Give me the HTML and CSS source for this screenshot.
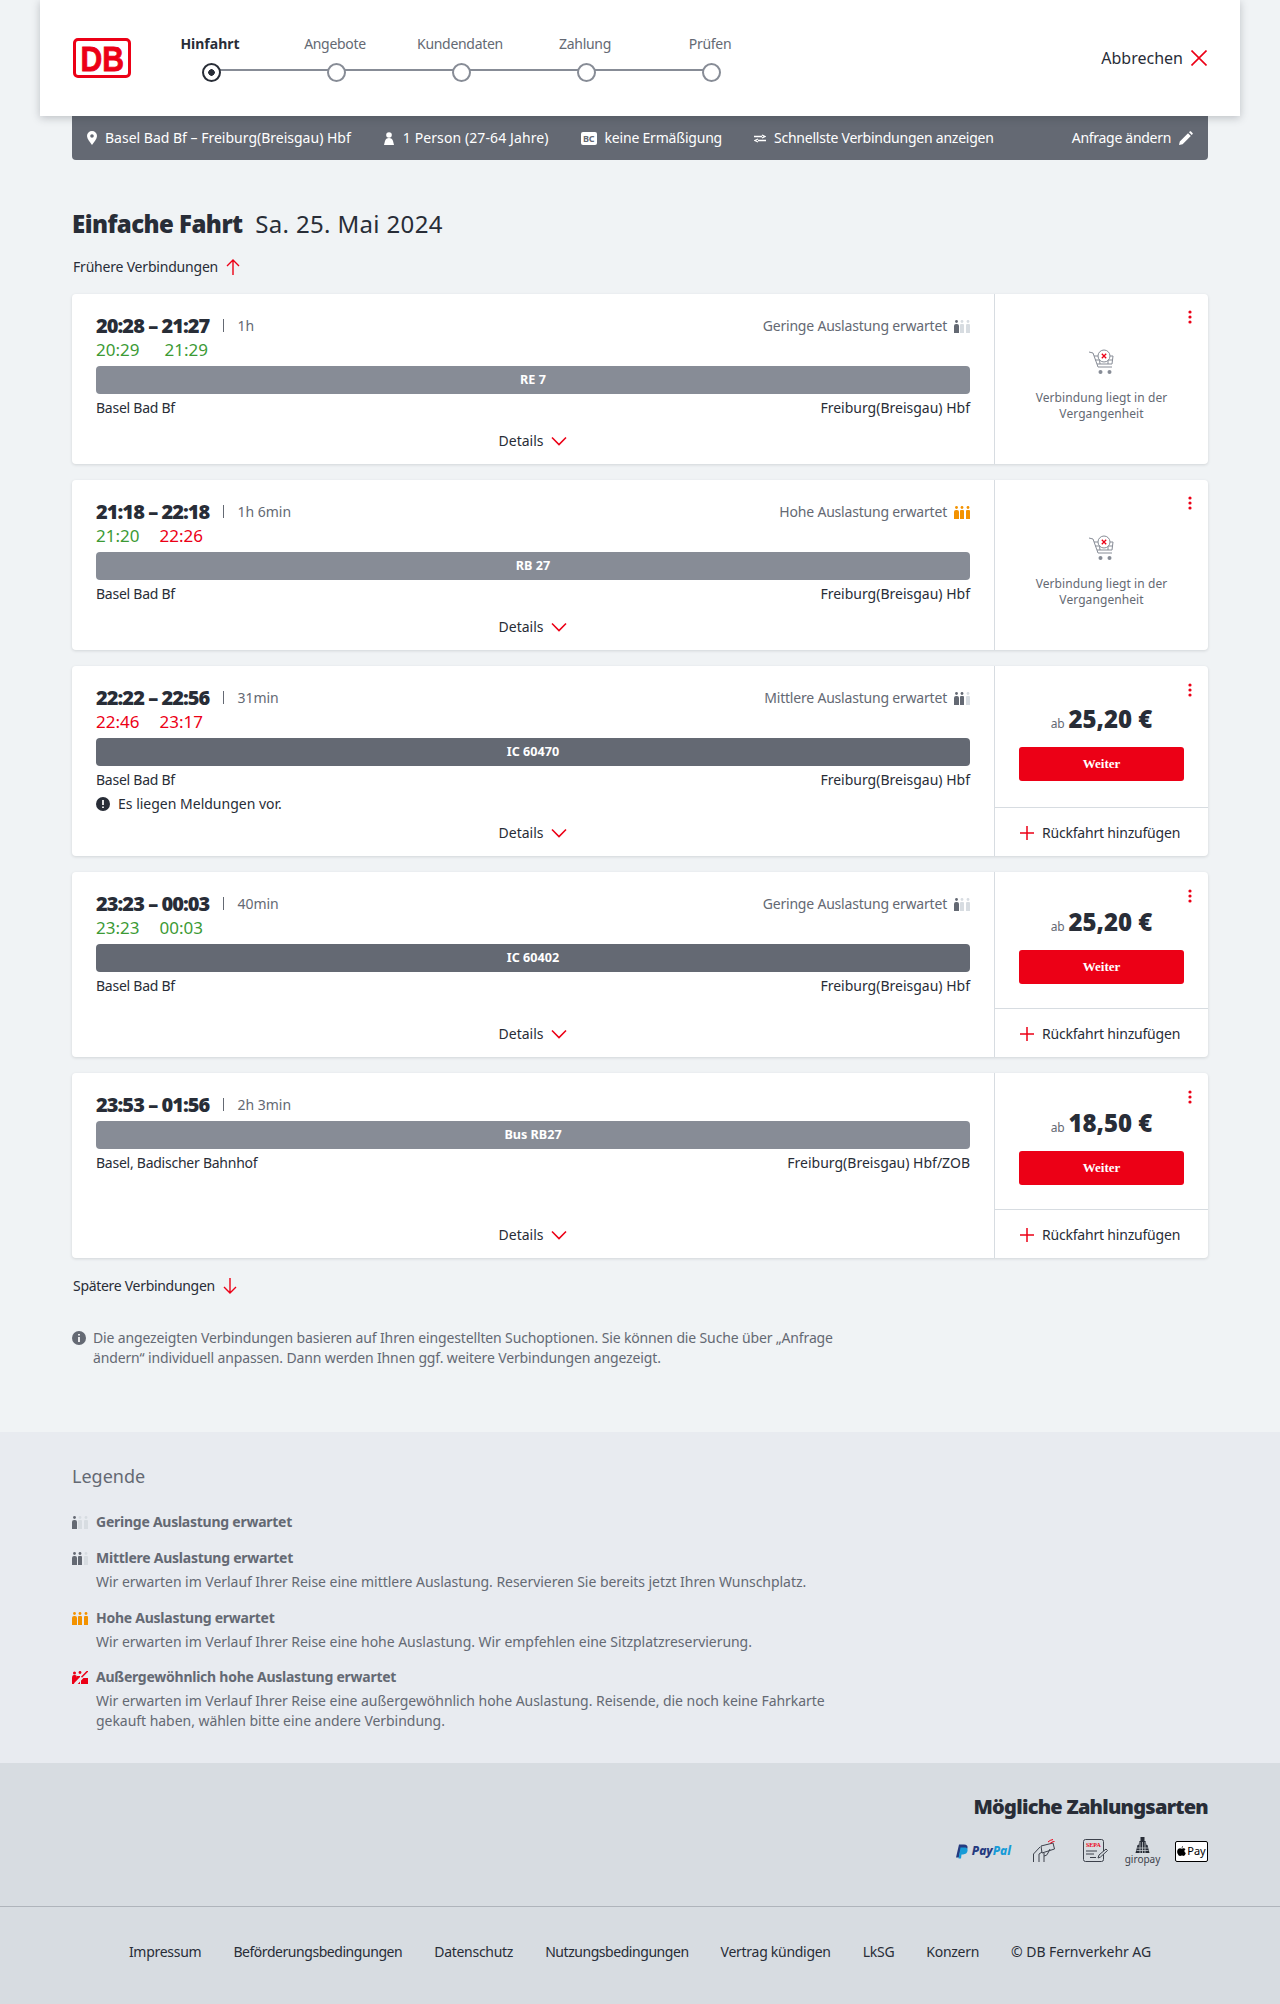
FILE: index.html
```html
<!DOCTYPE html>
<html lang="de">
<head>
    <meta charset="UTF-8">
    <meta name="viewport" content="width=device-width, initial-scale=1.0">
    <title>Verbindungen</title>
    <link rel="stylesheet" href="styles.css">
</head>
<body>
    <!-- shared icons -->
    <svg class="defs" width="0" height="0">
        <symbol id="occ-1" viewBox="0 0 16 13">
            <g fill="#d7dce1"><circle cx="8" cy="1.500" r="1.400"/><path d="M6 5q0-1 1-1h2q1 0 1 1v8H6z"/><circle cx="14" cy="1.500" r="1.400"/><path d="M12 5q0-1 1-1h2q1 0 1 1v8h-4z"/></g>
            <g fill="#646973"><circle cx="2.500" cy="1.500" r="1.400"/><path d="M0 6q0-2 2-2h1q2 0 2 2v7H0z"/></g>
        </symbol>
        <symbol id="occ-2" viewBox="0 0 16 13">
            <g fill="#d7dce1"><circle cx="14" cy="1.500" r="1.400"/><path d="M12 5q0-1 1-1h2q1 0 1 1v8h-4z"/></g>
            <g fill="#646973"><circle cx="2.500" cy="1.500" r="1.400"/><path d="M0 6q0-2 2-2h1q2 0 2 2v7H0z"/><circle cx="8" cy="1.500" r="1.400"/><path d="M6 5q0-1 1-1h2q1 0 1 1v8H6z"/></g>
        </symbol>
        <symbol id="occ-3" viewBox="0 0 16 13">
            <g fill="#f39200"><circle cx="2.500" cy="1.500" r="1.400"/><path d="M0 6q0-2 2-2h1q2 0 2 2v7H0z"/><circle cx="8" cy="1.500" r="1.400"/><path d="M6 5q0-1 1-1h2q1 0 1 1v8H6z"/><circle cx="14" cy="1.500" r="1.400"/><path d="M12 5q0-1 1-1h2q1 0 1 1v8h-4z"/></g>
        </symbol>
        <symbol id="occ-4" viewBox="0 0 16 13">
            <g fill="#ec0016"><circle cx="2.500" cy="2" r="1.500"/><path d="M0 7q0-3 2-3h1q2 0 2 3v6H0z"/><path d="M5 5h3v8H5z"/><circle cx="8" cy="1.500" r="1.400"/><path d="M9 7h7v6H9z"/></g>
            <path d="M16.500-.5L3 13.500" stroke="#e8ebf0" stroke-width="3.200"/>
            <path d="M15.800-.2L9.500 6.300" stroke="#ec0016" stroke-width="1.500"/>
        </symbol>
        <symbol id="chev" viewBox="0 0 16 10">
            <path d="M1 1.500l7 7 7-7" fill="none" stroke="#ec0016" stroke-width="1.600"/>
        </symbol>
        <symbol id="dots" viewBox="0 0 4 14">
            <circle cx="2" cy="2" r="1.600"/><circle cx="2" cy="7" r="1.600"/><circle cx="2" cy="12" r="1.600"/>
        </symbol>
        <symbol id="plus" viewBox="0 0 14 14">
            <path d="M7 0v14M0 7h14" fill="none" stroke="#ec0016" stroke-width="1.500"/>
        </symbol>
        <symbol id="cart" viewBox="0 0 26 26">
            <g fill="none" stroke="#878c96" stroke-width="1">
                <path d="M0 3l4 1 5 14h14"/><path d="M5 7h19l-1 8H8"/><path d="M6 11h17"/><path d="M10 7l1 8M19 7v8"/><circle cx="15" cy="7" r="6" fill="#fff"/>
            </g>
            <path d="M12.800 4.800l4.400 4.400M17.200 4.800l-4.400 4.400" stroke="#ec0016" stroke-width="1.300"/>
            <circle cx="11.500" cy="23" r="2" fill="#878c96"/><circle cx="20.500" cy="23" r="2" fill="#878c96"/>
        </symbol>
    </svg>

    <header class="top">
        <div class="logo"><span>DB</span></div>
        <ol class="steps">
            <li class="step step-on">Hinfahrt</li>
            <li class="step">Angebote</li>
            <li class="step">Kundendaten</li>
            <li class="step">Zahlung</li>
            <li class="step">Prüfen</li>
        </ol>
        <a class="cancel">Abbrechen
            <svg width="16" height="16" viewBox="0 0 16 16"><path d="M.5.500l15 15M15.500.500l-15 15" fill="none" stroke="#ec0016" stroke-width="1.600"/></svg>
        </a>
    </header>

    <div class="wrap">
        <div class="infobar">
            <span class="info info-route">
                <svg width="10" height="14" viewBox="0 0 10 14"><path fill-rule="evenodd" d="M5 0a5 5 0 0 1 5 5c0 3-3 6-5 9-2-3-5-6-5-9a5 5 0 0 1 5-5zm0 3.200a1.800 1.800 0 1 0 0 3.600 1.800 1.800 0 0 0 0-3.600z" fill="#fff"/></svg>
                Basel Bad Bf – Freiburg(Breisgau) Hbf</span>
            <span class="info info-person">
                <svg width="12" height="13" viewBox="0 0 12 13"><circle cx="6" cy="3" r="2.800" fill="#fff"/><path d="M1 13l1-4q.8-3 4-3t4 3l1 4z" fill="#fff"/></svg>
                1 Person (27-64 Jahre)</span>
            <span class="info info-card"><b class="bc">BC</b>keine Ermäßigung</span>
            <span class="info info-fast">
                <svg width="12" height="9" viewBox="0 0 12 9"><path d="M0 2.500h8M8 1l3 1.500L8 4M12 6.500H4M4 5L1 6.500 4 8" fill="none" stroke="#fff" stroke-width="1.300"/></svg>
                Schnellste Verbindungen anzeigen</span>
            <a class="change">Anfrage ändern
                <svg width="14" height="14" viewBox="0 0 14 14"><path d="M0 14l.8-3.600L9 2.200 11.800 5 3.600 13.200zM10 1.200L11 .3q.4-.3.8 0l1.900 1.900q.3.4 0 .8l-1 1z" fill="#fff"/></svg>
            </a>
        </div>

        <h1 class="title"><strong>Einfache Fahrt</strong> Sa. 25. Mai 2024</h1>

        <a class="more more-top">Frühere Verbindungen
            <svg width="14" height="16" viewBox="0 0 14 16"><path d="M7 16V1M1 7l6-6 6 6" fill="none" stroke="#ec0016" stroke-width="1.400"/></svg>
        </a>

        <!-- card 1 -->
        <article class="card card-short">
            <div class="conn">
                <div class="row">
                    <div class="times"><b class="plan">20:28 – 21:27</b><span class="dur">1h</span></div>
                    <div class="load">Geringe Auslastung erwartet <svg class="occ"><use href="#occ-1"/></svg></div>
                </div>
                <div class="real real-wide"><span class="ok">20:29</span><span class="ok">21:29</span></div>
                <div class="train train-light">RE 7</div>
                <div class="row stations"><span>Basel Bad Bf</span><span>Freiburg(Breisgau) Hbf</span></div>
                <a class="details">Details <svg class="chev"><use href="#chev"/></svg></a>
            </div>
            <aside class="side side-past">
                <svg class="dots"><use href="#dots"/></svg>
                <svg class="cart"><use href="#cart"/></svg>
                <p>Verbindung liegt in der Vergangenheit</p>
            </aside>
        </article>

        <!-- card 2 -->
        <article class="card card-short">
            <div class="conn">
                <div class="row">
                    <div class="times"><b class="plan">21:18 – 22:18</b><span class="dur">1h 6min</span></div>
                    <div class="load">Hohe Auslastung erwartet <svg class="occ"><use href="#occ-3"/></svg></div>
                </div>
                <div class="real"><span class="ok">21:20</span><span class="late">22:26</span></div>
                <div class="train train-light">RB 27</div>
                <div class="row stations"><span>Basel Bad Bf</span><span>Freiburg(Breisgau) Hbf</span></div>
                <a class="details">Details <svg class="chev"><use href="#chev"/></svg></a>
            </div>
            <aside class="side side-past">
                <svg class="dots"><use href="#dots"/></svg>
                <svg class="cart"><use href="#cart"/></svg>
                <p>Verbindung liegt in der Vergangenheit</p>
            </aside>
        </article>

        <!-- card 3 -->
        <article class="card card-notice">
            <div class="conn">
                <div class="row">
                    <div class="times"><b class="plan">22:22 – 22:56</b><span class="dur">31min</span></div>
                    <div class="load">Mittlere Auslastung erwartet <svg class="occ"><use href="#occ-2"/></svg></div>
                </div>
                <div class="real"><span class="late">22:46</span><span class="late">23:17</span></div>
                <div class="train train-dark">IC 60470</div>
                <div class="row stations"><span>Basel Bad Bf</span><span>Freiburg(Breisgau) Hbf</span></div>
                <div class="notice">
                    <svg width="14" height="14" viewBox="0 0 14 14"><circle cx="7" cy="7" r="7" fill="#282d37"/><path d="M7 3v5M7 9.500v1.600" stroke="#fff" stroke-width="1.700"/></svg>
                    Es liegen Meldungen vor.
                </div>
                <a class="details">Details <svg class="chev"><use href="#chev"/></svg></a>
            </div>
            <aside class="side">
                <div class="offer">
                    <svg class="dots"><use href="#dots"/></svg>
                    <div class="price"><small>ab</small> <b>25,20 €</b></div>
                    <button class="next">Weiter</button>
                </div>
                <a class="back"><svg class="plus"><use href="#plus"/></svg>Rückfahrt hinzufügen</a>
            </aside>
        </article>

        <!-- card 4 -->
        <article class="card card-tall">
            <div class="conn">
                <div class="row">
                    <div class="times"><b class="plan">23:23 – 00:03</b><span class="dur">40min</span></div>
                    <div class="load">Geringe Auslastung erwartet <svg class="occ"><use href="#occ-1"/></svg></div>
                </div>
                <div class="real"><span class="ok">23:23</span><span class="ok">00:03</span></div>
                <div class="train train-dark">IC 60402</div>
                <div class="row stations"><span>Basel Bad Bf</span><span>Freiburg(Breisgau) Hbf</span></div>
                <a class="details">Details <svg class="chev"><use href="#chev"/></svg></a>
            </div>
            <aside class="side">
                <div class="offer">
                    <svg class="dots"><use href="#dots"/></svg>
                    <div class="price"><small>ab</small> <b>25,20 €</b></div>
                    <button class="next">Weiter</button>
                </div>
                <a class="back"><svg class="plus"><use href="#plus"/></svg>Rückfahrt hinzufügen</a>
            </aside>
        </article>

        <!-- card 5 -->
        <article class="card card-tall">
            <div class="conn">
                <div class="row">
                    <div class="times"><b class="plan">23:53 – 01:56</b><span class="dur">2h 3min</span></div>
                </div>
                <div class="train train-light">Bus RB27</div>
                <div class="row stations"><span>Basel, Badischer Bahnhof</span><span>Freiburg(Breisgau) Hbf/ZOB</span></div>
                <a class="details">Details <svg class="chev"><use href="#chev"/></svg></a>
            </div>
            <aside class="side">
                <div class="offer">
                    <svg class="dots"><use href="#dots"/></svg>
                    <div class="price"><small>ab</small> <b>18,50 €</b></div>
                    <button class="next">Weiter</button>
                </div>
                <a class="back"><svg class="plus"><use href="#plus"/></svg>Rückfahrt hinzufügen</a>
            </aside>
        </article>

        <a class="more more-bottom">Spätere Verbindungen
            <svg width="14" height="16" viewBox="0 0 14 16"><path d="M7 0v15M1 9l6 6 6-6" fill="none" stroke="#ec0016" stroke-width="1.400"/></svg>
        </a>

        <div class="hint">
            <svg width="14" height="14" viewBox="0 0 14 14"><circle cx="7" cy="7" r="7" fill="#646973"/><path d="M7 6v5M7 3v1.600" stroke="#fff" stroke-width="1.700"/></svg>
            <p>Die angezeigten Verbindungen basieren auf Ihren eingestellten Suchoptionen. Sie können die Suche über „Anfrage ändern“ individuell anpassen. Dann werden Ihnen ggf. weitere Verbindungen angezeigt.</p>
        </div>
    </div>

    <section class="legend">
        <h2>Legende</h2>
        <div class="legend-item legend-first">
            <svg class="occ"><use href="#occ-1"/></svg>
            <div><h3>Geringe Auslastung erwartet</h3></div>
        </div>
        <div class="legend-item legend-second">
            <svg class="occ"><use href="#occ-2"/></svg>
            <div><h3>Mittlere Auslastung erwartet</h3>
            <p>Wir erwarten im Verlauf Ihrer Reise eine mittlere Auslastung. Reservieren Sie bereits jetzt Ihren Wunschplatz.</p></div>
        </div>
        <div class="legend-item">
            <svg class="occ"><use href="#occ-3"/></svg>
            <div><h3>Hohe Auslastung erwartet</h3>
            <p>Wir erwarten im Verlauf Ihrer Reise eine hohe Auslastung. Wir empfehlen eine Sitzplatzreservierung.</p></div>
        </div>
        <div class="legend-item">
            <svg class="occ"><use href="#occ-4"/></svg>
            <div><h3>Außergewöhnlich hohe Auslastung erwartet</h3>
            <p>Wir erwarten im Verlauf Ihrer Reise eine außergewöhnlich hohe Auslastung. Reisende, die noch keine Fahrkarte gekauft haben, wählen bitte eine andere Verbindung.</p></div>
        </div>
    </section>

    <footer class="foot">
        <div class="pay">
            <h2>Mögliche Zahlungsarten</h2>
            <div class="pay-icons">
                <span class="paypal">
                    <svg width="12" height="15" viewBox="0 0 12 14"><path d="M3 0h5q4 0 3.500 3.500T6 7.500H4L3 13H0z" fill="#253b80"/><path d="M4.500 3h5q2.500.5 2 3.500T7 10H5.500L5 14H2.500z" fill="#179bd7"/></svg>
                    <i>Pay<em>Pal</em></i>
                </span>
                <svg class="pay-hand" width="23" height="24" viewBox="0 0 23 24"><g fill="none" stroke="#3c414b"><path d="M.5 23v-8L7 8"/><path d="M8 7l12-3 1.500 6L9 14z" fill="#d7dce1"/><path d="M6 23v-8l3-2M11 23v-9"/><path d="M11 17q3 0 4-3l2-4"/></g><path d="M15 3q2-2 5-2.500M17 4.500q2-2 4.500-2" fill="none" stroke="#ec0016"/></svg>
                <span class="sepa">
                    <b>SEPA</b>
                    <svg width="25" height="24" viewBox="0 0 25 24"><rect x=".5" y=".5" width="20" height="22" rx="2" fill="none" stroke="#3c414b"/><path d="M3 12h11M3 15h8M7 18.500h6" stroke="#3c414b"/><path d="M15 19l1-3 7-6 1.500 1.500-7 6.500z" fill="#d7dce1" stroke="#3c414b"/></svg>
                </span>
                <span class="giropay">
                    <svg width="15" height="16" viewBox="0 0 14 16"><path d="M5 0h4v4h1l1 4h1l2 8H0l2-8h1l1-4h1z" fill="#282d37"/><path d="M1 11h12M1 13.500h12M4.500 5v11M7 5v11M9.500 5v11" stroke="#d7dce1" stroke-width=".7"/></svg>
                    giropay
                </span>
                <span class="applepay">
                    <svg width="9" height="10" viewBox="0 0 9 10"><path d="M6 0q.2 1.400-1.300 2.200Q4.500.8 6 0zM4.600 2.700c.7 0 1.200-.5 2-.5q1.200 0 1.900 1-1.400 1-1 2.400.3 1 1.300 1.500-.7 2.900-2.100 2.900c-.7 0-1-.4-1.800-.4s-1.200.4-1.800.4Q1.500 10 .5 7.500-.5 4.500 1.400 2.800q1.500-1.200 3.200-.1z" fill="#000"/></svg>
                    Pay
                </span>
            </div>
        </div>
        <nav class="foot-links">
            <a>Impressum</a>
            <a class="link-long">Beförderungsbedingungen</a>
            <a>Datenschutz</a>
            <a class="link-long">Nutzungsbedingungen</a>
            <a>Vertrag kündigen</a>
            <a>LkSG</a>
            <a>Konzern</a>
            <a class="link-copy">© DB Fernverkehr AG</a>
        </nav>
    </footer>
</body>
</html>
```

FILE: styles.css
```css
*{
    margin: 0;
    padding: 0;
    box-sizing: border-box;
}
body {
    width: 1280px;
    background: #f0f3f5;
    color: #282d37;
    font-family: "Noto Sans", sans-serif;
    font-size: 14px;
    line-height: 20px;
}
.defs{
    position: absolute;
}
ol{
    list-style: none;
}

/* top bar */
.top {
    position: relative;
    z-index: 2;
    display: flex;
    align-items: center;
    width: 1200px;
    height: 116px;
    margin: 0 40px;
    padding: 0 33px;
    background: #fff;
    box-shadow: 0 2px 8px rgba(40, 45, 55, 0.25);
}
.logo {
    display: flex;
    align-items: center;
    justify-content: center;
    width: 58px;
    height: 40px;
    border: 3.500px solid #ec0016;
    border-radius: 5px;
    background: #fff;
}
.logo span {
    display: block;
    color: #ec0016;
    font-family: "Liberation Sans", sans-serif;
    font-size: 35px;
    font-weight: 700;
    line-height: 33px;
    -webkit-text-stroke: 0.8px #ec0016;
    transform: scaleX(0.86);
}
.steps {
    display: flex;
    margin: 0 0 0 15.500px;
}
.step {
    position: relative;
    width: 125px;
    height: 50px;
    padding: 1px 0 0 2px;
    color: #646973;
    font-size: 14px;
    letter-spacing: -0.3px;
    text-align: center;
}
.step::before {
    content: "";
    position: absolute;
    z-index: 1;
    left: 55px;
    top: 30px;
    width: 15px;
    height: 15px;
    border: 2px solid #878c96;
    border-radius: 50%;
    background: #fff;
}
.step::after {
    content: "";
    position: absolute;
    left: 62px;
    top: 36px;
    width: 125px;
    height: 2px;
    background: #878c96;
}
.step:last-child::after {
    display: none;
}
.step-on {
    color: #282d37;
    font-weight: 700;
    letter-spacing: 0;
}
.step-on::before {
    border-color: #282d37;
    background: radial-gradient(circle, #282d37 0 3px, #fff 3.5px);
}
.cancel {
    display: flex;
    align-items: center;
    gap: 8px;
    margin-left: auto;
    font-size: 16px;
}

/* content */
.wrap {
    padding: 0 72px;
}
.infobar {
    display: flex;
    align-items: center;
    height: 44px;
    padding: 0 15px;
    border-radius: 0 0 4px 4px;
    background: #646973;
    color: #fff;
}
.info {
    display: flex;
    align-items: center;
    gap: 8px;
    margin-right: 32px;
}
.info-person {
    letter-spacing: 0.1px;
}
.info-card {
    letter-spacing: -0.2px;
}
.info-fast {
    letter-spacing: -0.24px;
}
.bc {
    width: 16px;
    height: 13px;
    border-radius: 2px;
    background: #fff;
    color: #646973;
    font-size: 9px;
    line-height: 13px;
    text-align: center;
}
.change {
    display: flex;
    align-items: center;
    gap: 8px;
    margin-left: auto;
    letter-spacing: -0.3px;
}
.title {
    margin-top: 48px;
    font-size: 24px;
    font-weight: 400;
    line-height: 32px;
    letter-spacing: 0.35px;
}
.title strong {
    margin-right: 6px;
    font-weight: 900;
    letter-spacing: -0.55px;
}
.more {
    display: flex;
    align-items: center;
    gap: 8px;
    padding-left: 1px;
}
.more-top {
    margin: 17px 0 17px;
    letter-spacing: -0.2px;
}
.more-bottom {
    margin-top: 18px;
    letter-spacing: -0.3px;
}
.card {
    display: flex;
    margin-bottom: 16px;
    border-radius: 4px;
    background: #fff;
    box-shadow: 0 1px 3px rgba(40, 45, 55, 0.15);
}
.card-short { height: 170px; }
.card-notice { height: 190px; }
.card-tall { height: 185px; }
.conn {
    display: flex;
    flex-direction: column;
    flex: 1;
    padding: 20px 24px 0;
    border-right: 1px solid #d7dce1;
}
.row {
    display: flex;
    justify-content: space-between;
    align-items: center;
}
.times {
    display: flex;
    align-items: center;
    height: 24px;
}
.plan {
    font-size: 20px;
    font-weight: 900;
    letter-spacing: -0.95px;
}
.dur {
    position: relative;
    margin-left: 14px;
    padding-left: 14px;
    color: #646973;
}
.dur::before {
    content: "";
    position: absolute;
    left: 0;
    top: 3px;
    width: 1px;
    height: 13px;
    background: #646973;
}
.load {
    display: flex;
    align-items: center;
    gap: 7px;
    color: #646973;
    letter-spacing: -0.2px;
}
.occ {
    flex: none;
    width: 16px;
    height: 13px;
}
.real {
    display: flex;
    gap: 20px;
    height: 24px;
    font-size: 17px;
    line-height: 24px;
}
.real-wide {
    gap: 25px;
}
.ok { color: #3c9a35; }
.late { color: #ec0016; }
.train {
    height: 28px;
    margin-top: 4px;
    border-radius: 4px;
    color: #fff;
    font-size: 12.600px;
    font-weight: 700;
    line-height: 28px;
    text-align: center;
}
.train-light { background: #878c96; }
.train-dark { background: #646973; }
.stations {
    margin-top: 4px;
}
.stations span:first-child {
    letter-spacing: -0.25px;
}
.notice {
    display: flex;
    align-items: center;
    gap: 8px;
    margin-top: 4px;
}
.details {
    display: flex;
    align-items: center;
    justify-content: center;
    gap: 8px;
    margin-top: auto;
    margin-bottom: 13px;
}
.chev {
    width: 16px;
    height: 10px;
}
.dots {
    position: absolute;
    right: 16px;
    top: 16px;
    width: 4px;
    height: 14px;
    fill: #ec0016;
}
.offer .dots {
    top: 17px;
}
.side {
    position: relative;
    display: flex;
    flex-direction: column;
    width: 213px;
}
.side-past {
    align-items: center;
    padding-top: 55px;
    color: #646973;
    font-size: 12px;
    line-height: 16px;
    text-align: center;
}
.cart {
    width: 26px;
    height: 26px;
}
.side-past p {
    width: 150px;
    margin-top: 15px;
    letter-spacing: 0.08px;
}
.offer {
    position: relative;
    flex: 1;
    padding-top: 35px;
    text-align: center;
}
.card-tall .offer {
    padding-top: 32px;
}
.price {
    height: 36px;
    line-height: 36px;
}
.price small {
    color: #646973;
    font-size: 12px;
}
.price b {
    font-size: 24px;
    font-weight: 900;
}
.next {
    display: block;
    width: 165px;
    height: 34px;
    margin: 10px 0 0 24px;
    border: 0;
    border-radius: 3px;
    background: #ec0016;
    color: #fff;
    font-family: "Liberation Serif", serif;
    font-size: 13px;
    font-weight: 700;
}
.back {
    display: flex;
    align-items: center;
    gap: 8px;
    height: 49px;
    padding: 2px 0 0 25px;
    border-top: 1px solid #d7dce1;
    letter-spacing: -0.2px;
}
.plus {
    width: 14px;
    height: 14px;
}
.hint {
    display: flex;
    gap: 7px;
    margin-top: 32px;
    margin-bottom: 64px;
    color: #646973;
    letter-spacing: -0.14px;
}
.hint svg {
    flex: none;
    margin-top: 3px;
}
.hint p {
    width: 765px;
}

/* legend */
.legend {
    height: 331px;
    padding: 32px 72px 0;
    background: #e8ebf0;
    color: #646973;
}
.legend h2 {
    margin-bottom: 24px;
    font-size: 18px;
    font-weight: 400;
    line-height: 24px;
}
.legend-item {
    display: flex;
    gap: 8px;
    margin-bottom: 15px;
}
.legend-first {
    margin-bottom: 12px;
}
.legend-second {
    margin-bottom: 16px;
}
.legend-item .occ {
    margin-top: 4px;
}
.legend-item h3 {
    margin-bottom: 4px;
    font-size: 14px;
    font-weight: 700;
    letter-spacing: -0.25px;
}
.legend-item p {
    width: 760px;
    letter-spacing: -0.04px;
}

/* footer */
.foot {
    height: 243px;
    background: #d7dce1;
}
.pay {
    height: 144px;
    padding: 30px 72px 0;
    border-bottom: 1px solid #afb4bb;
    text-align: right;
}
.pay h2 {
    font-size: 20px;
    font-weight: 900;
    line-height: 28px;
    letter-spacing: -0.75px;
}
.pay-icons {
    display: flex;
    justify-content: flex-end;
    align-items: center;
    height: 34px;
    margin-top: 13px;
}
.paypal {
    display: flex;
    align-items: center;
    gap: 4px;
    margin-right: 22px;
    color: #253b80;
    font-size: 12px;
    font-weight: 800;
}
.paypal em {
    color: #179bd7;
}
.pay-hand {
    margin-right: 27px;
}
.sepa {
    position: relative;
    display: block;
    width: 25px;
    height: 24px;
    margin-right: 17px;
}
.sepa b {
    position: absolute;
    left: 3px;
    top: 2px;
    color: #ec0016;
    font-family: "Liberation Serif", serif;
    font-size: 6px;
    line-height: 8px;
}
.giropay {
    display: flex;
    flex-direction: column;
    align-items: center;
    width: 35px;
    margin-right: 15px;
    font-size: 10px;
    line-height: 12px;
    color: #3c414b;
}
.applepay {
    display: flex;
    align-items: center;
    justify-content: center;
    gap: 1px;
    width: 33px;
    height: 21px;
    border: 1px solid #000;
    border-radius: 2px;
    background: #fff;
    color: #000;
    font-size: 11px;
}
.foot-links {
    display: flex;
    justify-content: center;
    gap: 32px;
    margin-top: 35px;
    letter-spacing: -0.28px;
}
.foot-links .link-long {
    letter-spacing: -0.45px;
}
.foot-links .link-copy {
    letter-spacing: -0.05px;
}
```
